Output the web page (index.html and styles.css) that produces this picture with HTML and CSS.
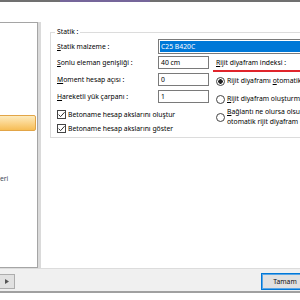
FILE: index.html
```html
<!DOCTYPE html>
<html lang="tr">
<head>
  <meta charset="UTF-8" />
  <meta name="viewport" content="width=device-width, initial-scale=1" />
  <title>Ayarlar</title>
  <link rel="stylesheet" href="styles.css">
</head>
<body>
  <div class="window">
    <div class="titlebar"></div>

    <div class="main">
      <div class="sidebar">
        <div class="tree">
          <div class="tree-item selected"></div>
          <div class="tree-item group">Deprem parametreleri</div>
        </div>
        <div class="splitter"></div>
      </div>

      <div class="content">
        <fieldset class="group-box">
          <legend>Statik :</legend>

          <div class="row-top">
            <label class="lbl"><u>S</u>tatik malzeme :</label>
            <div class="combo"><span>C25 B420C</span></div>
          </div>

          <div class="cols">
            <div class="col-left">
              <div class="field-row">
                <label class="lbl"><u>S</u>onlu eleman genişliği :</label>
                <div class="edit">40 cm</div>
              </div>
              <div class="field-row">
                <label class="lbl"><u>M</u>oment hesap açısı :</label>
                <div class="edit">0</div>
              </div>
              <div class="field-row">
                <label class="lbl"><u>H</u>areketli yük çarpanı :</label>
                <div class="edit">1</div>
              </div>

              <label class="check">
                <span class="box"><svg width="9" height="9" viewBox="0 0 9 9"><path d="M1.6 4.6 L3.6 6.6 L7.6 2.2" fill="none" stroke="#333" stroke-width="1"/></svg></span>
                <span>Betoname hesap akslarını oluştur</span>
              </label>
              <label class="check">
                <span class="box"><svg width="9" height="9" viewBox="0 0 9 9"><path d="M1.6 4.6 L3.6 6.6 L7.6 2.2" fill="none" stroke="#333" stroke-width="1"/></svg></span>
                <span>Betoname hesap akslarını göster</span>
              </label>
            </div>

            <div class="col-right">
              <div class="sub-lbl"><u>R</u>ijit diyafram indeksi :</div>
              <div class="red-mark"></div>
              <label class="radio r1"><span class="dot on"></span><span>Rijit diyaframı <u>o</u>tomatik oluştur</span></label>
              <label class="radio r2"><span class="dot"></span><span><u>R</u>ijit diyafram oluşturma</span></label>
              <label class="radio r3"><span class="dot"></span><span><u>B</u>ağlantı ne olursa olsun<br>otomatik rijit diyafram oluştur</span></label>
            </div>
          </div>
        </fieldset>
      </div>
    </div>

    <div class="footer">
      <button class="nav-btn"><svg width="4" height="5" viewBox="0 0 4 5"><path d="M4 0 L0 2.5 L4 5 Z" fill="#555"/></svg></button>
      <button class="nav-btn"><svg width="4" height="5" viewBox="0 0 4 5"><path d="M0 0 L4 2.5 L0 5 Z" fill="#555"/></svg></button>
      <div class="spacer"></div>
      <button class="ok-btn">Tamam</button>
    </div>
  </div>
</body>
</html>
```

FILE: styles.css
```css
* {
  box-sizing: border-box;
}
body {
  margin: 0;
  width: 300px;
  height: 300px;
  overflow: hidden;
  background: #fff;
  font-family: "Noto Sans", sans-serif;
  font-size: 6.8px;
  color: #000;
}
.window {
  width: 400px;
  margin-left: -80px;
}
.titlebar {
  height: 2px;
  background: linear-gradient(to right, #707070 0 140px, #75669a 140px 230px, #707070 230px);
}
.main {
  display: flex;
  height: 266px;
}
.sidebar {
  display: flex;
  padding-top: 20px;
}
.tree {
  width: 118px;
  border: 1px solid #a5a5a5;
  border-left: none;
  padding: 92px 1px 0 0;
}
.tree-item {
  height: 16px;
  line-height: 16px;
  padding-left: 6px;
  color: #3a4658;
  white-space: nowrap;
}
.tree-item.selected {
  border: 1px solid #e2a547;
  border-radius: 2px;
  background: linear-gradient(#fdebbd, #fbd48a 50%, #f6bd55);
}
.tree-item.group {
  margin-top: 40px;
  padding-left: 17px;
}
.splitter {
  width: 3px;
  background: #dadada;
}
.content {
  flex: 1;
}
.group-box {
  margin: 25px 0 0 9px;
  padding: 0 0 2px 6px;
  border: 1px solid #dcdcdc;
  min-width: 0;
}
.group-box legend {
  margin-left: -2px;
  padding: 0 2px;
  line-height: 10px;
}
.row-top {
  display: flex;
  margin-top: 2px;
}
.lbl {
  width: 101px;
  line-height: 15px;
  white-space: nowrap;
}
.combo {
  flex: 1;
  height: 15px;
  border: 1px solid #7a7a7a;
  padding: 1px;
}
.combo span {
  display: block;
  height: 11px;
  line-height: 11px;
  padding-left: 1px;
  background: #0078d7;
  color: #fff;
}
.cols {
  display: flex;
  margin-top: 2px;
}
.col-left {
  width: 159px;
}
.field-row {
  display: flex;
  height: 13px;
  margin-bottom: 4px;
}
.field-row .lbl {
  line-height: 13px;
}
.edit {
  width: 51px;
  height: 13px;
  border: 1px solid #7a7a7a;
  padding-left: 2px;
  line-height: 11px;
}
.check {
  display: flex;
  align-items: center;
  height: 14px;
  white-space: nowrap;
}
.box {
  width: 9px;
  height: 9px;
  border: 1px solid #444;
  margin-right: 2px;
  display: flex;
  flex: none;
}
.box svg {
  margin: -1px;
}
.col-right {
  flex: 1;
  white-space: nowrap;
}
.sub-lbl {
  line-height: 13px;
}
.red-mark {
  height: 2px;
  margin: 1px 0 0 -3px;
  background: #e0242b;
}
.radio {
  display: flex;
  align-items: center;
  line-height: 12px;
}
.radio.r1 {
  margin-top: 3px;
}
.radio.r2 {
  margin-top: 6px;
}
.radio.r3 {
  margin-top: 2px;
  line-height: 10px;
}
.dot {
  width: 9px;
  height: 9px;
  border: 1px solid #444;
  border-radius: 50%;
  margin-right: 2px;
  flex: none;
}
.dot.on {
  background: radial-gradient(circle, #222 0 2px, #fff 2.5px);
}
.footer {
  display: flex;
  align-items: flex-start;
  height: 25px;
  border-top: 1px solid #dcdcdc;
  border-bottom: 2px solid #a0a0a0;
  background: #f0f0f0;
  padding: 4px 11px 0 58px;
}
.nav-btn {
  width: 16px;
  height: 15px;
  margin: 1px 5px 0 0;
  border: 1px solid #adadad;
  background: #e1e1e1;
  padding: 0;
  display: flex;
  align-items: center;
  justify-content: center;
}
.spacer {
  flex: 1;
}
.ok-btn {
  width: 48px;
  height: 17px;
  border: 1px solid #0078d7;
  box-shadow: inset 0 0 0 1px #5aa6e6;
  background: #e1e1e1;
  font-family: inherit;
  font-size: inherit;
  color: #111;
  padding: 0;
}
```
